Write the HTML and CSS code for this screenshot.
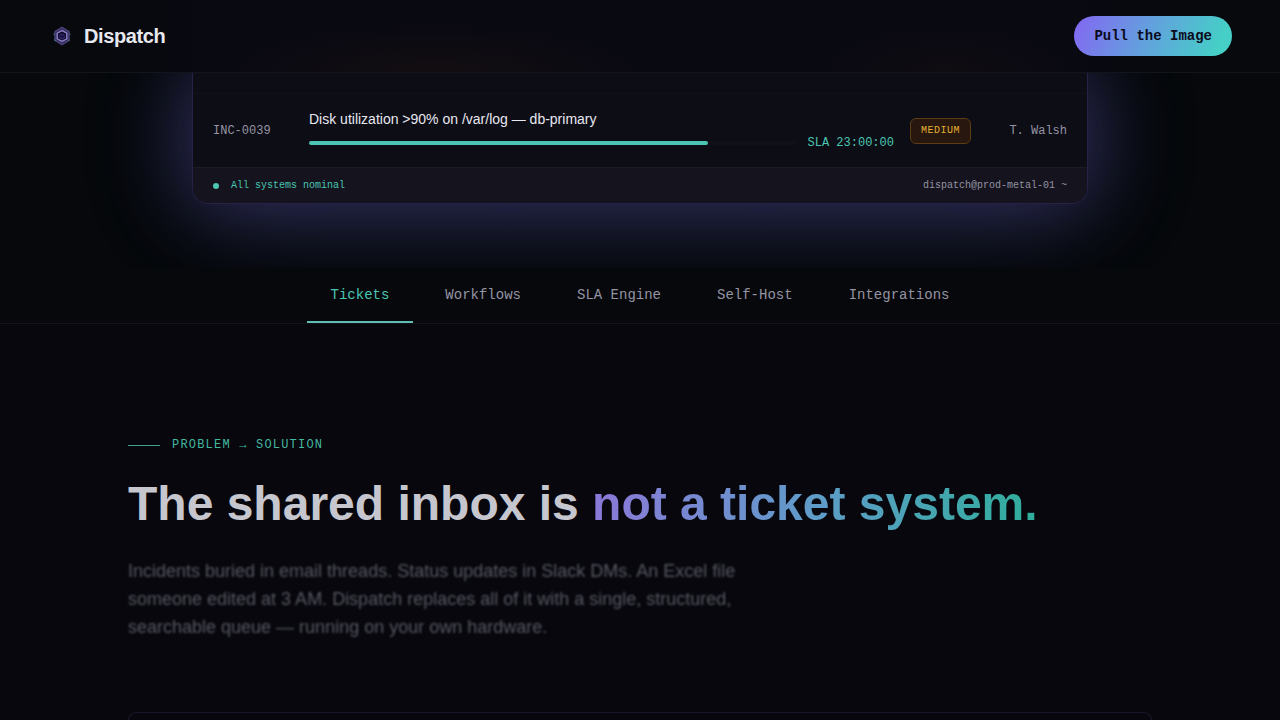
FILE: index.html
```html
<!DOCTYPE html>
<html lang="en">
<head>
    <meta charset="UTF-8">
    <meta name="viewport" content="width=device-width, initial-scale=1.0">
    <title>Dispatch</title>
    <link rel="stylesheet" href="styles.css">
</head>
<body>
    <header class="navbar">
        <a href="#" class="brand">
            <svg class="brand-icon" viewBox="0 0 28 28" fill="none" aria-hidden="true">
                <path d="M14 5.5 L21 9.75 V18.25 L14 22.5 L7 18.25 V9.75 Z" fill="#2a2350" stroke="#4a4178" stroke-width="1.5"/>
                <path d="M14 8.5 L18.8 11.2 V16.8 L14 19.5 L9.2 16.8 V11.2 Z" fill="#0b0920" stroke="#8b7dc4" stroke-width="1.5"/>
                <circle cx="14" cy="14.5" r="2.5" fill="#1b1245" stroke="#3a2d78"/>
                <path d="M6 11.5 V13 M22 11.5 V13 M6 17.5 L8 19 M22 17.5 L20 19" stroke="#3b6f7c"/>
            </svg>
            <span>Dispatch</span>
        </a>
        <button type="button" class="btn-primary">Pull the Image</button>
    </header>

    <section class="hero">
        <div class="console">
            <div class="ticket-row">
                <span class="ticket-id">INC-0039</span>
                <div class="ticket-body">
                    <div class="ticket-title">Disk utilization &gt;90% on /var/log — db-primary</div>
                    <div class="sla">
                        <div class="sla-track"><div class="sla-fill" style="width: 82%"></div></div>
                        <span class="sla-time">SLA 23:00:00</span>
                    </div>
                </div>
                <span class="badge">MEDIUM</span>
                <span class="assignee">T. Walsh</span>
            </div>
            <div class="console-footer">
                <span class="status"><span class="status-dot"></span>All systems nominal</span>
                <span>dispatch@prod-metal-01 ~</span>
            </div>
        </div>
    </section>

    <nav class="tabs">
        <a href="#tickets" class="tab active">Tickets</a>
        <a href="#workflows" class="tab">Workflows</a>
        <a href="#sla" class="tab">SLA Engine</a>
        <a href="#self-host" class="tab">Self-Host</a>
        <a href="#integrations" class="tab">Integrations</a>
    </nav>

    <main class="problem" id="tickets">
        <p class="eyebrow">PROBLEM → SOLUTION</p>
        <h1>The shared inbox is <span class="gradient-text">not a ticket system.</span></h1>
        <p class="lead">Incidents buried in email threads. Status updates in Slack DMs. An Excel file someone edited at 3 AM. Dispatch replaces all of it with a single, structured, searchable queue — running on your own hardware.</p>
        <div class="panel"></div>
    </main>
</body>
</html>
```

FILE: styles.css
```css
:root {
    --bg: #07070d;
    --violet: #8b5cf6;
    --teal: #4ac6b2;
    --muted: #9494a3;
    --sans: "Liberation Sans", Arial, sans-serif;
    --mono: "Liberation Mono", "Courier New", monospace;
}

* {
    box-sizing: border-box;
    margin: 0;
    padding: 0;
}

body {
    min-height: 100vh;
    display: flex;
    flex-direction: column;
    background: var(--bg);
    color: #e8e8f0;
    font-family: var(--sans);
}

a {
    color: inherit;
    text-decoration: none;
}

/* top bar */
.navbar {
    position: relative;
    z-index: 2;
    display: flex;
    align-items: center;
    justify-content: space-between;
    padding: 16px 48px;
    border-bottom: 1px solid #14141c;
    background:
        radial-gradient(ellipse 220px 50px at 34% 100%, rgba(130, 70, 10, 0.08), transparent),
        radial-gradient(ellipse 140px 50px at 74% 100%, rgba(130, 70, 10, 0.05), transparent),
        linear-gradient(90deg, #07090d 8%, #090912 18%, #090912 82%, #07090d 92%);
}

.brand {
    display: flex;
    align-items: center;
    gap: 8px;
    font-size: 20px;
    font-weight: bold;
    letter-spacing: -0.02em;
}

.brand-icon {
    width: 28px;
    height: 28px;
}

.btn-primary {
    height: 40px;
    padding: 0 20px;
    border: none;
    border-radius: 20px;
    background: linear-gradient(115deg, #8466f2, #60a5dc 50%, #45cfc6 90%);
    color: #0a0a1c;
    font-family: var(--mono);
    font-size: 14px;
    font-weight: bold;
    cursor: pointer;
}

/* ticket console */
.hero {
    padding: 0 48px 64px;
    overflow: hidden;
    background: #06080b;
}

.console {
    max-width: 896px;
    margin: 0 auto;
    padding-top: 20px;
    border: 1px solid #272148;
    border-top: none;
    border-radius: 0 0 16px 16px;
    background: #0d0d16;
    box-shadow: 0 0 80px rgba(124, 92, 226, 0.36), 0 0 120px rgba(90, 150, 200, 0.2);
    overflow: hidden;
}

.ticket-row {
    display: grid;
    grid-template-columns: 80px 1fr auto 80px;
    align-items: center;
    gap: 16px;
    padding: 15px 20px;
    border-top: 1px solid #11111a;
    font-family: var(--mono);
    font-size: 12px;
    color: var(--muted);
}

.ticket-body {
    display: flex;
    flex-direction: column;
    gap: 5px;
}

.ticket-title {
    color: #e8e8f0;
    font-family: var(--sans);
    font-size: 14px;
    line-height: 20px;
}

.sla {
    display: flex;
    align-items: center;
    gap: 12px;
    line-height: 18px;
}

.sla-track {
    flex: 1;
    height: 4px;
    border-radius: 2px;
    background: #10111a;
}

.sla-fill {
    height: 100%;
    border-radius: 2px;
    background: var(--teal);
}

.sla-time {
    color: var(--teal);
}

.badge {
    padding: 4px 10px;
    border: 1px solid #5c3d14;
    border-radius: 6px;
    background: #27170f;
    color: #e5b033;
    font-size: 10px;
    line-height: 16px;
    letter-spacing: 0.05em;
}

.assignee {
    text-align: right;
}

.console-footer {
    display: flex;
    align-items: center;
    justify-content: space-between;
    padding: 9px 20px;
    border-top: 1px solid #1b1a25;
    background: #14131e;
    color: var(--muted);
    font-family: var(--mono);
    font-size: 10px;
    line-height: 17px;
}

.status {
    display: flex;
    align-items: center;
    gap: 12px;
    color: var(--teal);
}

.status-dot {
    width: 6px;
    height: 6px;
    border-radius: 50%;
    background: var(--teal);
}

/* section tabs */
.tabs {
    display: flex;
    justify-content: center;
    gap: 8px;
    border-bottom: 1px solid #15131f;
    background: #07080c;
}

.tab {
    padding: 16px 24px 14px;
    border-bottom: 2px solid transparent;
    color: var(--muted);
    font-family: var(--mono);
    font-size: 14px;
    line-height: 23px;
}

.tab.active {
    border-color: #5fbdb4;
    color: var(--teal);
}

/* problem section */
.problem {
    flex: 1;
    display: flex;
    flex-direction: column;
    width: 100%;
    max-width: 1120px;
    margin: 0 auto;
    padding: 112px 48px 0;
}

.eyebrow {
    display: flex;
    align-items: center;
    gap: 12px;
    margin-bottom: 24px;
    color: #43b8a0;
    font-family: var(--mono);
    font-size: 12px;
    line-height: 18px;
    letter-spacing: 0.1em;
}

.eyebrow::before {
    content: "";
    width: 32px;
    height: 1px;
    background: #43a08e;
}

h1 {
    margin-bottom: 27px;
    font-size: 48px;
    line-height: 52px;
    color: #c6c6ce;
}

.gradient-text {
    background: linear-gradient(90deg, #8b78d8, #5f9cc9 50%, #2fae9b);
    -webkit-background-clip: text;
    background-clip: text;
    color: transparent;
}

.lead {
    max-width: 640px;
    margin-bottom: 71px;
    color: #585864;
    font-size: 18px;
    line-height: 28px;
    filter: blur(1px);
}

.panel {
    flex: 1;
    border: 1px solid #1a1828;
    border-bottom: none;
    border-radius: 16px 16px 0 0;
}
```
